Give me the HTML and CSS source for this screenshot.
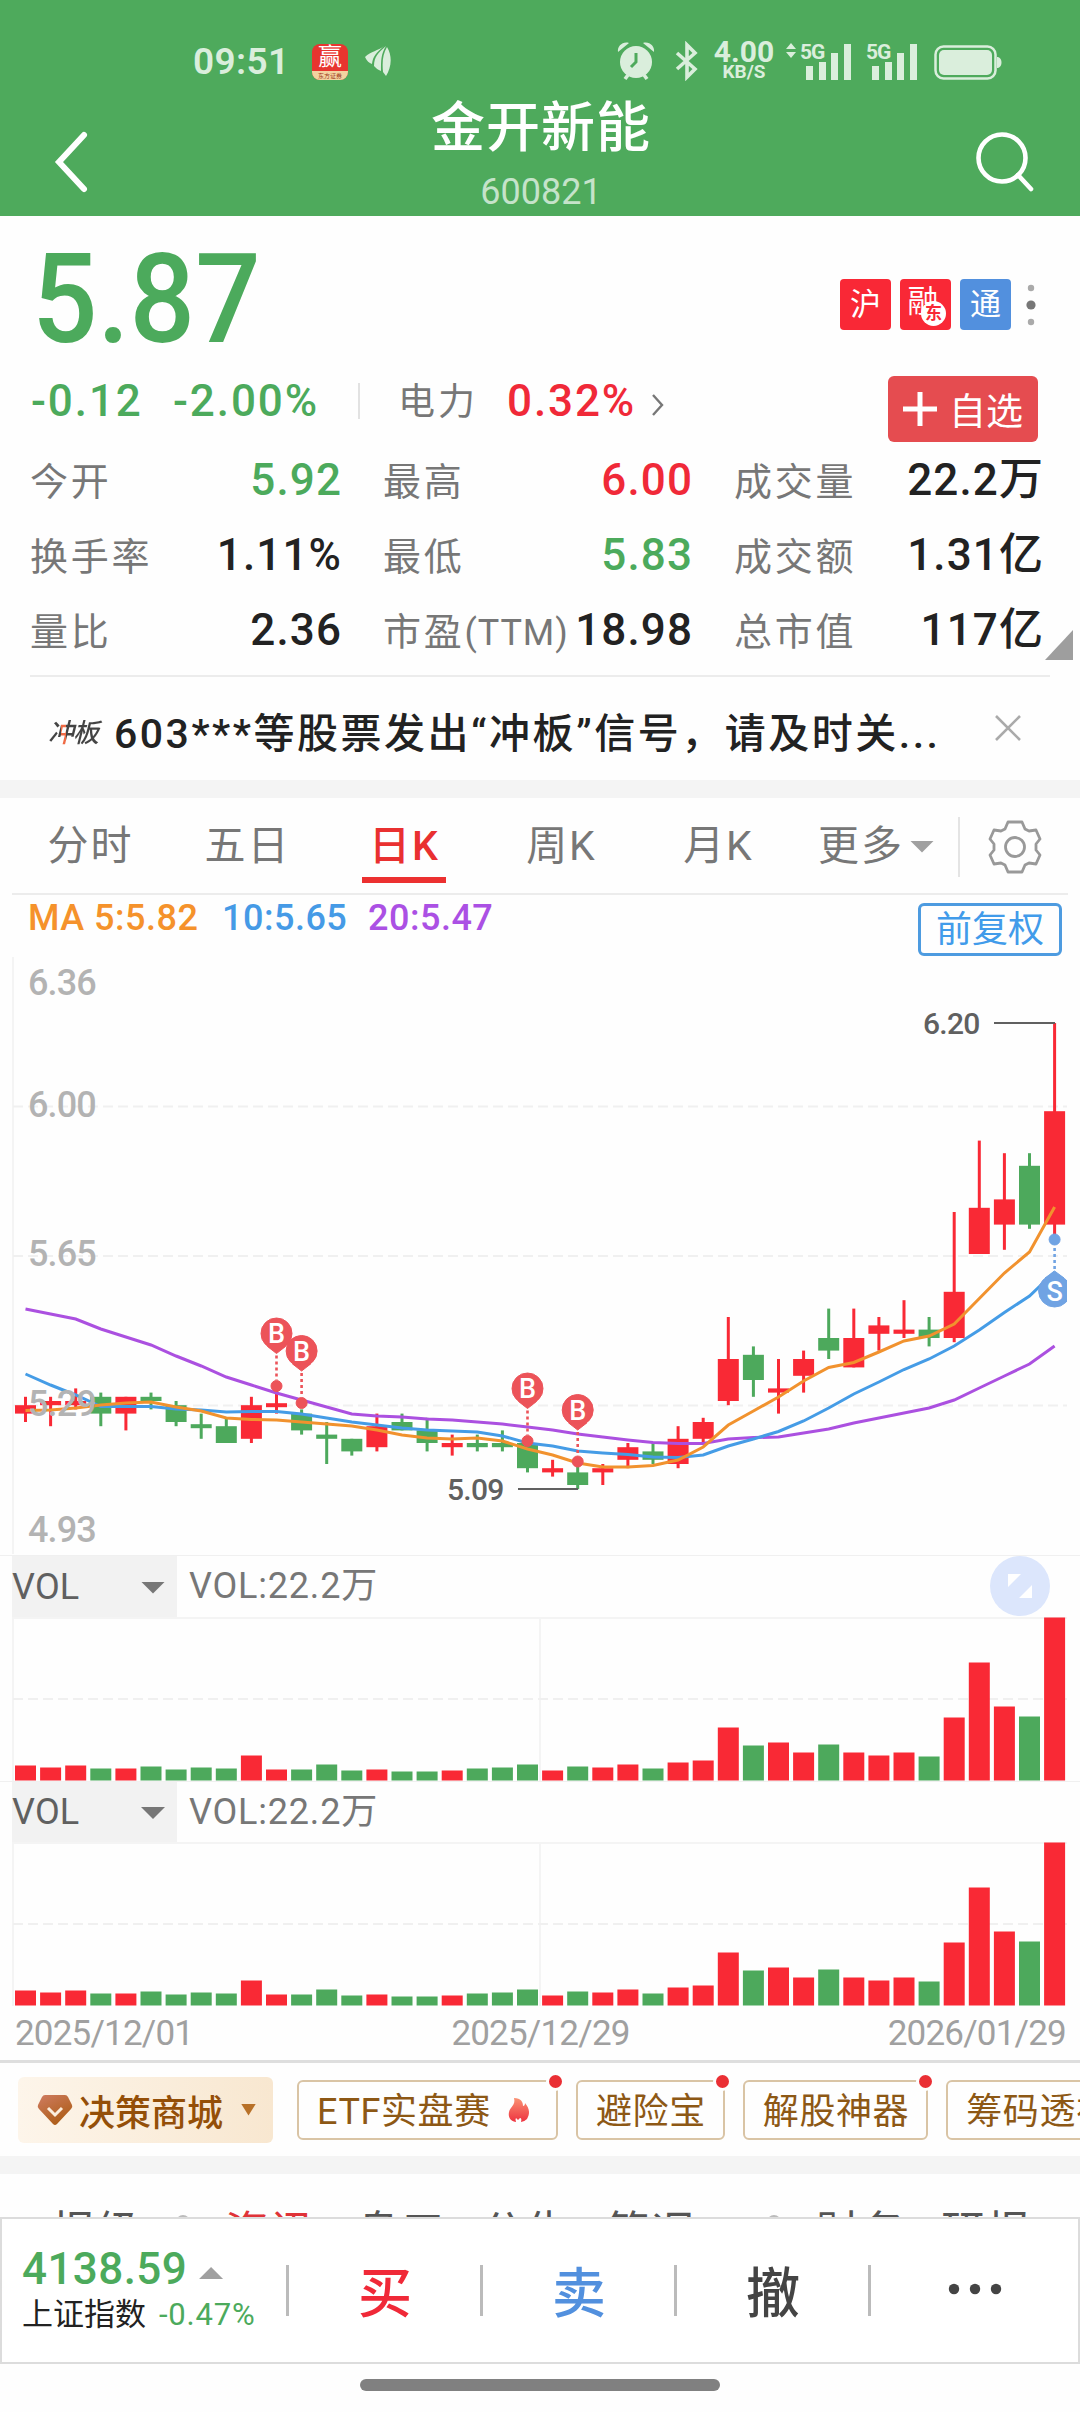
FILE: index.html
```html
<!DOCTYPE html>
<html lang="zh-CN">

<head>
    <meta charset="UTF-8">
    <meta name="viewport" content="width=device-width, initial-scale=1.0">
    <title>金开新能 600821</title>
    <link rel="stylesheet" href="styles.css">
</head>

<body>
    <header class="header">
        <div class="status">
            <span class="clock">09:51</span>
            <div class="app-icon"><span>赢</span><small>东方证券</small></div>
            <svg class="leaf" width="28" height="32" viewBox="0 0 28 32">
                <path d="M1 12C7 6 14 6 20 1C12 8 9 11 8 19C5 18 3 16 1 12Z M10 21C10 12 14 8 22 1C17 9 17 15 17 26C14 25 12 23 10 21Z M19 27C18 16 19 9 23 2C29 12 27 23 22 31Z" />
            </svg>
            <div class="status-right">
                <svg width="38" height="40" viewBox="0 0 38 40">
                    <circle cx="19" cy="21" r="16" />
                    <path d="M1 11C0 5 6 0 12 2Z M37 11C38 5 32 0 26 2Z" />
                    <path class="line" d="M11 34L8 38M27 34L30 38" />
                    <path class="hand" d="M19 12V21L14 26" />
                </svg>
                <svg class="bluetooth" width="24" height="40" viewBox="0 0 24 40">
                    <path class="line" d="M2 12L20 28L12 36V4L20 12L2 28" />
                </svg>
                <div class="speed"><b>4.00</b><b class="unit">KB/S</b></div>
                <svg width="72" height="40" viewBox="0 0 72 40">
                    <path d="M1 8L6 2L11 8Z M1 11H11L6 17Z" />
                    <text x="15" y="18">5G</text>
                    <path d="M21 25h7v14h-7z M34 21h7v18h-7z M46 12h7v27h-7z M59 3h7v36h-7z" />
                </svg>
                <svg class="second-sim" width="56" height="40" viewBox="0 0 56 40">
                    <text x="0" y="18">5G</text>
                    <path d="M6 25h7v14h-7z M19 21h7v18h-7z M31 12h7v27h-7z M44 3h7v36h-7z" />
                </svg>
                <svg class="battery" width="68" height="40" viewBox="0 0 68 40">
                    <rect class="shell" x="1.5" y="5.5" width="60" height="32" rx="8" />
                    <rect x="5" y="9" width="53" height="25" rx="5" />
                    <path d="M63 16C69 16 69 27 63 27Z" />
                </svg>
            </div>
        </div>
        <div class="titlebar">
            <svg width="40" height="64" viewBox="0 0 40 64">
                <path d="M33 5L8 32L33 59" />
            </svg>
            <div class="title">
                <h1>金开新能</h1>
                <p>600821</p>
            </div>
            <svg class="search" width="64" height="64" viewBox="0 0 64 64">
                <circle cx="28" cy="28" r="23.5" />
                <path d="M44 45L57 59" />
            </svg>
        </div>
    </header>

    <section class="quote">
        <div class="price-row">
            <span class="price">5.87</span>
            <div class="badges">
                <span class="badge">沪</span>
                <span class="badge margin">融<i>东</i></span>
                <span class="badge blue">通</span>
                <svg width="12" height="44" viewBox="0 0 12 44">
                    <circle cx="6" cy="5" r="3.2" />
                    <circle class="mid" cx="6" cy="22" r="4.6" />
                    <circle cx="6" cy="39" r="3.2" />
                </svg>
            </div>
        </div>
        <div class="change-row">
            <span class="green diff">-0.12</span>
            <span class="green percent">-2.00%</span>
            <span class="sector">电力</span>
            <span class="red">0.32%</span>
            <svg width="14" height="26" viewBox="0 0 14 26">
                <path d="M2 3L11 13L2 23" />
            </svg>
            <button class="add"><svg width="36" height="36" viewBox="0 0 36 36"><path d="M18 1V35M1 18H35" /></svg>自选</button>
        </div>
        <div class="stats">
            <div class="stat"><span>今开</span><b class="green">5.92</b></div>
            <div class="stat"><span>最高</span><b class="red">6.00</b></div>
            <div class="stat"><span>成交量</span><b>22.2万</b></div>
            <div class="stat"><span>换手率</span><b>1.11%</b></div>
            <div class="stat"><span>最低</span><b class="green">5.83</b></div>
            <div class="stat"><span>成交额</span><b>1.31亿</b></div>
            <div class="stat"><span>量比</span><b>2.36</b></div>
            <div class="stat"><span>市盈<small>(TTM)</small></span><b>18.98</b></div>
            <div class="stat"><span>总市值</span><b>117亿</b></div>
        </div>
    </section>

    <section class="notice">
        <span class="tag">冲板</span>
        <p>603***等股票发出“冲板”信号，请及时关...</p>
        <svg width="28" height="28" viewBox="0 0 28 28">
            <path d="M2 2L26 26M26 2L2 26" />
        </svg>
    </section>

    <nav class="tabs">
        <span>分时</span>
        <span>五日</span>
        <span class="active">日K</span>
        <span>周K</span>
        <span>月K</span>
        <span class="more">更多<i class="down"></i></span>
        <svg width="60" height="60" viewBox="-30 -30 60 60">
            <path d="M-7 -25H7L10 -18L14 -16L21 -17L25 -8L21 -3V3L25 8L21 17L14 16L10 18L7 25H-7L-10 18L-14 16L-21 17L-25 8L-21 3V-3L-25 -8L-21 -17L-14 -16L-10 -18Z" />
            <circle r="9.5" />
        </svg>
    </nav>

    <div class="legend">
        <span class="ma5">MA 5:5.82</span>
        <span class="ma10">10:5.65</span>
        <span class="ma20">20:5.47</span>
        <button>前复权</button>
    </div>
    <svg class="chart" id="kline" width="1080" height="598" viewBox="0 0 1080 598"></svg>

    <div class="vol-head">
        <span class="select">VOL<i class="down"></i></span>
        <span>VOL:22.2万</span>
        <svg width="60" height="60" viewBox="0 0 60 60">
            <circle cx="30" cy="30" r="30" />
            <path d="M18 18H31L18 31Z M42 29V42H29Z" />
        </svg>
    </div>
    <svg class="chart volume" width="1080" height="164" viewBox="0 0 1080 164"></svg>
    <div class="vol-head second">
        <span class="select">VOL<i class="down"></i></span>
        <span>VOL:22.2万</span>
    </div>
    <svg class="chart volume" width="1080" height="164" viewBox="0 0 1080 164"></svg>
    <div class="dates">
        <span>2025/12/01</span>
        <span>2025/12/29</span>
        <span>2026/01/29</span>
    </div>

    <div class="tools">
        <span class="mall">
            <svg width="36" height="32" viewBox="0 0 36 32">
                <defs>
                    <linearGradient id="gem" x1="0" y1="0" x2="0.6" y2="1">
                        <stop offset="0" stop-color="#cf7c62" />
                        <stop offset="1" stop-color="#ad5d16" />
                    </linearGradient>
                </defs>
                <path fill="url(#gem)" d="M8 1H28Q30 1 31 3L35 11Q36 13 34 15L20 30Q18 32 16 30L2 15Q0 13 1 11L5 3Q6 1 8 1Z" />
                <path class="tick" d="M11 14L18 21L25 14" />
            </svg>
            决策商城<i class="down"></i>
        </span>
        <span class="tool etf dot">ETF实盘赛
            <svg width="22" height="26" viewBox="0 0 22 26">
                <defs>
                    <linearGradient id="fire" x1="0" y1="0" x2="0" y2="1">
                        <stop offset="0" stop-color="#fa9273" />
                        <stop offset="1" stop-color="#ee3340" />
                    </linearGradient>
                </defs>
                <path fill="url(#fire)" d="M6 1C13 1 15 5 15 9Q17 9 17 6C22 12 22 17 19 22Q16 25 13 25Q14 21 12 21L10 23L8 21Q7 22 8 25C2 24 0 20 1 15C2 10 8 8 6 1Z" />
            </svg>
        </span>
        <span class="tool dot">避险宝</span>
        <span class="tool dot">解股神器</span>
        <span class="tool">筹码透视</span>
    </div>

    <nav class="info">
        <span>报级</span><i></i>
        <span class="active">资讯</span>
        <span>盘口</span>
        <span>公告</span>
        <span>简况</span><i class="wide"></i>
        <span>财务</span>
        <span>研报</span>
    </nav>

    <footer class="trade">
        <div class="index">
            <div class="points">4138.59<i class="up"></i></div>
            <div class="name">上证指数<span>-0.47%</span></div>
        </div>
        <span class="action red">买</span>
        <span class="action sell">卖</span>
        <span class="action">撤</span>
        <span class="action">
            <svg width="54" height="12" viewBox="0 0 54 12">
                <circle cx="6" cy="6" r="5.2" />
                <circle cx="27" cy="6" r="5.2" />
                <circle cx="48" cy="6" r="5.2" />
            </svg>
        </span>
    </footer>
    <div class="home"></div>

    <script src="chart.js"></script>
</body>

</html>
```
FILE: styles.css
```css
* {
    margin: 0;
    padding: 0;
    box-sizing: border-box;
}

body {
    width: 1080px;
    height: 2412px;
    overflow: hidden;
    background-color: #fefefe;
    color: #222;
    font-family: Roboto, "Noto Sans CJK SC", sans-serif;
}

svg {
    display: block;
    flex: none;
}

i {
    font-style: normal;
}

span,
p,
b {
    white-space: nowrap;
}

.green {
    color: #4caa5c;
}

.red {
    color: #f02938;
}

.down {
    width: 24px;
    height: 12px;
    background-color: #777;
    clip-path: polygon(0 0, 100% 0, 50% 100%);
}

/* header */

.header {
    height: 216px;
    padding-top: 36px;
    background-color: #4eaa5c;
    color: white;
}

.status {
    display: flex;
    align-items: center;
    height: 50px;
    padding: 0 78px 0 193px;
    color: #daeedc;
    fill: #daeedc;
}

.clock {
    width: 119px;
    font-size: 37px;
    font-weight: 600;
    letter-spacing: 0.4px;
}

.app-icon {
    width: 36px;
    height: 36px;
    margin: 2px 16px 0 0;
    border-radius: 8px;
    overflow: hidden;
    background-color: #e8352f;
    color: white;
    text-align: center;
}

.app-icon span {
    display: block;
    height: 27px;
    font-size: 24px;
    line-height: 27px;
}

.app-icon small {
    display: block;
    height: 9px;
    background-color: #f3d3a0;
    color: #a03a20;
    font-size: 6px;
    line-height: 9px;
}

.status-right {
    display: flex;
    align-items: center;
    margin-left: auto;
}

.status .line {
    fill: none;
    stroke: #daeedc;
    stroke-width: 3.6;
}

.status .hand {
    fill: none;
    stroke: #4eaa5c;
    stroke-width: 3;
}

.status text {
    font-size: 21px;
    font-weight: 700;
    letter-spacing: -1px;
}

.bluetooth {
    margin: 0 14px 0 20px;
}

.speed {
    display: flex;
    flex-direction: column;
    align-items: center;
    width: 62px;
    margin-right: 10px;
}

.speed b {
    font-size: 30px;
    line-height: 22px;
}

.speed .unit {
    font-size: 19px;
    line-height: 18px;
}

.second-sim {
    margin-left: 9px;
}

.battery {
    margin-left: 12px;
}

.battery .shell {
    fill: none;
    stroke: #daeedc;
    stroke-width: 2.5;
}

.titlebar {
    display: flex;
    justify-content: space-between;
    height: 130px;
    padding: 0 42px 0 51px;
    fill: none;
    stroke: white;
    stroke-width: 6;
    stroke-linecap: round;
}

.titlebar > svg {
    margin-top: 44px;
}

.titlebar .search {
    stroke-width: 4.6;
}

.title {
    padding: 13px 0 0 17px;
    text-align: center;
}

.title h1 {
    font-size: 54px;
    font-weight: 500;
    line-height: 60px;
    letter-spacing: 1px;
}

.title p {
    margin-top: 15px;
    color: #c5e3ca;
    font-size: 36px;
    line-height: 36px;
}

/* quote */

.quote {
    position: relative;
    height: 459px;
    padding-top: 21px;
}

.quote::after {
    content: "";
    position: absolute;
    right: 7px;
    bottom: 15px;
    border-left: 28px solid transparent;
    border-bottom: 30px solid #9e9e9e;
}

.price-row {
    display: flex;
    justify-content: space-between;
    height: 125px;
    padding: 0 43px 0 32px;
}

.price {
    color: #4caa5c;
    font-size: 124px;
    font-weight: 500;
    line-height: 125px;
    transform: scaleX(0.93);
    transform-origin: left;
}

.badges {
    display: flex;
    align-items: center;
    gap: 9px;
    height: 51px;
    margin-top: 42px;
    fill: #aaa;
}

.badges svg {
    margin-left: 5px;
}

.badges .mid {
    fill: #777;
}

.badge {
    position: relative;
    width: 51px;
    height: 51px;
    border-radius: 4px;
    background-color: #f92836;
    color: white;
    font-size: 31px;
    line-height: 52px;
    text-align: center;
}

.badge.margin {
    padding-right: 5px;
    line-height: 46px;
}

.badge.blue {
    background-color: #5290de;
}

.badge i {
    position: absolute;
    right: 5px;
    bottom: 4px;
    width: 25px;
    height: 25px;
    border-radius: 50%;
    background-color: white;
    color: #f92836;
    font-size: 17px;
    font-weight: 700;
    line-height: 24px;
}

.change-row {
    display: flex;
    align-items: center;
    height: 78px;
    padding: 0 42px 0 31px;
    font-size: 44px;
    font-weight: 500;
    letter-spacing: 1.9px;
}

.diff {
    width: 142px;
}

.percent {
    width: 185px;
}

.sector {
    width: 149px;
    height: 36px;
    padding: 0 0 0 38px;
    border-left: 2px solid #e2e2e2;
    color: #777;
    font-size: 37px;
    font-weight: 400;
    line-height: 40px;
    letter-spacing: 3px;
}

.change-row > svg {
    margin: 8px 0 0 15px;
    fill: none;
    stroke: #777;
    stroke-width: 2.4;
}

.add {
    display: flex;
    align-items: center;
    gap: 11px;
    width: 150px;
    height: 66px;
    margin: 16px 0 0 auto;
    padding-left: 14px;
    border: none;
    border-radius: 6px;
    background-color: #e54c50;
    color: white;
    font-family: inherit;
    font-size: 37px;
    white-space: nowrap;
}

.add svg {
    stroke: white;
    stroke-width: 5;
}

.stats {
    display: grid;
    grid-template-columns: 310px 308px 308px;
    grid-auto-rows: 75px;
    column-gap: 43px;
    margin: 2px 0 0 30px;
}

.stat {
    display: flex;
    justify-content: space-between;
    line-height: 77px;
}

.stat span {
    color: #777;
    font-size: 38px;
    line-height: 80px;
    letter-spacing: 2.8px;
}

.stat small {
    font-size: 36px;
    letter-spacing: 0.9px;
}

.stat b {
    font-size: 44px;
    font-weight: 500;
    letter-spacing: 1.1px;
    margin-right: -2px;
}

.notice {
    display: flex;
    align-items: center;
    height: 105px;
    margin: 0 30px;
    padding: 3px 28px 0 18px;
    border-top: 2px solid #ececec;
}

.notice .tag {
    width: 66px;
    background: linear-gradient(90deg, #444 13px, #ef6a45 13px, #ef6a45 18px, #444 18px);
    background-clip: text;
    color: transparent;
    font-size: 26px;
    font-weight: 500;
    font-style: italic;
    letter-spacing: -1px;
}

.notice p {
    font-size: 41px;
    font-weight: 500;
    letter-spacing: 2.5px;
}

.notice svg {
    margin: -4px 0 0 auto;
    stroke: #aaa;
    stroke-width: 2.6;
}

/* chart */

.tabs {
    display: grid;
    grid-template-columns: repeat(5, 157px) 163px auto;
    align-items: center;
    height: 115px;
    padding-left: 12px;
    border-top: 18px solid #f4f4f4;
    background: linear-gradient(#ececec, #ececec) 12px 100% / 1056px 2px no-repeat;
    color: #777;
    font-size: 41px;
    line-height: 93px;
    letter-spacing: 2px;
    text-align: center;
}

.tabs .active {
    position: relative;
    color: #e93030;
    font-weight: 500;
}

.tabs .active::after {
    content: "";
    position: absolute;
    left: 36px;
    bottom: 10px;
    width: 84px;
    height: 6px;
    background-color: #ec3030;
}

.tabs .more {
    display: flex;
    align-items: center;
    gap: 6px;
    height: 60px;
    padding-left: 21px;
    border-right: 2px solid #e4e4e4;
}

.tabs .down {
    background-color: #a0a0a0;
}

.tabs svg {
    margin-left: 25px;
    fill: none;
    stroke: #999;
    stroke-width: 2.8;
    stroke-linejoin: round;
}

.legend {
    display: flex;
    height: 62px;
    padding: 0 18px 0 28px;
    font-size: 36px;
    font-weight: 500;
    line-height: 46px;
    letter-spacing: 0.5px;
}

.ma5 {
    width: 194px;
    color: #f5922b;
}

.ma10 {
    width: 146px;
    color: #459ae6;
}

.ma20 {
    color: #ab50e4;
}

.legend button {
    width: 144px;
    height: 53px;
    margin: 8px 0 0 auto;
    border: 3px solid #4d9be0;
    border-radius: 6px;
    background-color: #fefefe;
    color: #419bea;
    font-family: inherit;
    font-size: 36px;
    line-height: 44px;
}

.frame {
    fill: none;
    stroke: #f4f4f4;
    stroke-width: 2;
}

.dash {
    stroke: #f0f0f0;
    stroke-width: 2;
    stroke-dasharray: 10 5;
}

.rise {
    fill: #f92935;
    stroke: none;
}

.fall {
    fill: #4da95c;
    stroke: none;
}

.average {
    fill: none;
    stroke-width: 3;
}

.average.ma5 {
    stroke: #f1922e;
}

.average.ma10 {
    stroke: #459ce6;
}

.average.ma20 {
    stroke: #ab50e0;
}

.axis {
    fill: #b3b3b3;
    font-size: 36px;
    font-weight: 500;
    letter-spacing: -0.9px;
}

.extreme {
    fill: #606060;
    font-size: 30px;
    font-weight: 500;
    letter-spacing: -0.7px;
}

.pointer {
    stroke: #606060;
    stroke-width: 2;
}

.buy {
    fill: #ec5359;
    stroke: #ec5359;
}

.sell-mark {
    fill: #70a3e3;
    stroke: #70a3e3;
}

.stem {
    stroke-width: 2.6;
    stroke-dasharray: 3 3;
}

.letter {
    fill: white;
    stroke: none;
    font-size: 27px;
    font-weight: 500;
    text-anchor: middle;
}

.vol-head {
    display: flex;
    height: 62px;
    padding: 0 30px 0 12px;
    border-top: 1px solid #f0f0f0;
    color: #777;
    font-size: 36px;
    line-height: 61px;
    letter-spacing: 0.8px;
}

.vol-head.second {
    height: 61px;
}

.vol-head .select {
    display: flex;
    justify-content: space-between;
    align-items: center;
    width: 165px;
    margin-right: 12px;
    padding-right: 12px;
    background-color: #f2f2f2;
    color: #606060;
    line-height: 52px;
    letter-spacing: 0.2px;
}

.vol-head .select .down {
    margin-top: 2px;
}

.vol-head svg {
    margin-left: auto;
    fill: #dce6fc;
}

.vol-head path {
    fill: white;
}

.dates {
    display: flex;
    justify-content: space-between;
    padding: 0 14px 0 15px;
    color: #a0a0a0;
    font-size: 35px;
    line-height: 55px;
    height: 54px;
    letter-spacing: -0.8px;
}

/* tools */

.tools {
    display: flex;
    align-items: center;
    gap: 18px;
    height: 96px;
    padding-left: 18px;
    border-top: 3px solid #dedede;
    color: #8d5815;
    font-size: 36px;
}

.mall {
    display: flex;
    align-items: center;
    flex: none;
    width: 255px;
    height: 66px;
    margin-right: 6px;
    padding: 0 17px 0 19px;
    border-radius: 6px;
    background: linear-gradient(90deg, #fdf5ea, #f8e7d0);
    color: #944f08;
    font-weight: 500;
}

.mall svg {
    margin-right: 6px;
}

.mall .tick {
    fill: none;
    stroke: #fbeedd;
    stroke-width: 3;
}

.mall .down {
    width: 15px;
    margin-left: auto;
    background-color: #b87128;
}

.tool {
    position: relative;
    display: flex;
    align-items: center;
    justify-content: space-between;
    flex: none;
    height: 60px;
    padding: 0 17px 4px 18px;
    border: 2px solid #d9c4a5;
    border-radius: 6px;
    letter-spacing: 0.6px;
}

.etf {
    width: 261px;
    padding-right: 26px;
}

.etf svg {
    margin-top: 4px;
}

.dot::after {
    content: "";
    position: absolute;
    top: -10px;
    right: -9px;
    width: 13px;
    height: 13px;
    border: 3px solid #fefefe;
    border-radius: 50%;
    background-color: #ea2f34;
    box-sizing: content-box;
}

.info {
    display: flex;
    gap: 35px;
    height: 61px;
    padding: 32px 0 0 51px;
    border-top: 18px solid #f4f4f4;
    overflow: hidden;
    color: #555;
    font-size: 44px;
    line-height: 54px;
    letter-spacing: 1px;
}

.info .active {
    margin-right: 6px;
    color: #e03338;
}

.info i {
    width: 14px;
    height: 14px;
    margin-top: 9px;
    border-radius: 50%;
    background-color: #bbb;
}

.info .wide {
    margin-left: 36px;
}

.trade {
    display: flex;
    height: 147px;
    border: 2px solid #dcdcdc;
    background-color: white;
}

.index {
    width: 284px;
    padding: 24px 0 0 20px;
}

.points {
    display: flex;
    align-items: center;
    gap: 12px;
    color: #4caa5c;
    font-size: 44px;
    font-weight: 500;
    line-height: 52px;
    letter-spacing: 0.4px;
}

.up {
    width: 24px;
    height: 12px;
    margin-top: 8px;
    background-color: #a0a0a0;
    clip-path: polygon(0 100%, 100% 100%, 50% 0);
}

.name {
    font-size: 31px;
    line-height: 40px;
}

.name span {
    margin-left: 13px;
    color: #4caa5c;
    letter-spacing: 0.8px;
}

.action {
    display: flex;
    align-items: center;
    justify-content: center;
    width: 194px;
    padding: 0 0 3px 4px;
    color: #444;
    fill: #444;
    font-size: 54px;
    font-weight: 500;
    background: linear-gradient(#bbb, #bbb) 0 46px / 3px 51px no-repeat;
}

.action.red {
    color: #f02938;
}

.action:last-child {
    width: 210px;
}

.action.sell {
    color: #5290de;
}

.home {
    width: 360px;
    height: 12px;
    margin: 15px auto 0;
    border-radius: 6px;
    background-color: #808080;
}
```
FILE: chart.js
```js
const START = 25.5;
const STEP = 25.1;
const BAR = 21;

// open/close top, open/close bottom, high, low, 1 = rise, volume
const days = [
    [5.29, 5.27, 5.31, 5.25, 1, 15], [5.30, 5.29, 5.31, 5.24, 1, 13], [5.30, 5.29, 5.33, 5.28, 1, 15],
    [5.31, 5.27, 5.32, 5.24, 0, 12], [5.31, 5.27, 5.31, 5.23, 1, 12], [5.31, 5.30, 5.32, 5.28, 0, 14],
    [5.29, 5.25, 5.30, 5.24, 0, 11], [5.24, 5.24, 5.27, 5.21, 0, 13], [5.24, 5.20, 5.26, 5.20, 0, 12],
    [5.29, 5.21, 5.31, 5.20, 1, 25], [5.29, 5.29, 5.33, 5.27, 1, 11], [5.27, 5.23, 5.28, 5.22, 0, 11],
    [5.22, 5.21, 5.25, 5.15, 0, 16], [5.21, 5.18, 5.21, 5.17, 0, 10], [5.24, 5.19, 5.27, 5.18, 1, 11],
    [5.25, 5.23, 5.27, 5.23, 0, 9], [5.23, 5.20, 5.26, 5.18, 0, 9], [5.20, 5.19, 5.22, 5.17, 1, 10],
    [5.20, 5.19, 5.22, 5.18, 0, 12], [5.20, 5.19, 5.23, 5.18, 0, 13], [5.20, 5.14, 5.20, 5.13, 0, 16],
    [5.14, 5.13, 5.16, 5.12, 1, 10], [5.13, 5.10, 5.15, 5.09, 0, 14], [5.14, 5.13, 5.15, 5.10, 1, 13],
    [5.19, 5.16, 5.20, 5.14, 1, 16], [5.18, 5.16, 5.20, 5.15, 0, 12], [5.21, 5.15, 5.24, 5.14, 1, 18],
    [5.25, 5.21, 5.26, 5.20, 1, 20], [5.40, 5.30, 5.50, 5.29, 1, 53], [5.41, 5.35, 5.43, 5.31, 0, 35],
    [5.33, 5.32, 5.40, 5.27, 1, 38], [5.40, 5.36, 5.42, 5.32, 1, 28], [5.45, 5.42, 5.52, 5.40, 0, 36],
    [5.45, 5.38, 5.52, 5.38, 1, 28], [5.48, 5.46, 5.50, 5.42, 1, 25], [5.47, 5.46, 5.54, 5.45, 1, 28],
    [5.47, 5.45, 5.50, 5.43, 0, 24], [5.56, 5.45, 5.75, 5.44, 1, 63], [5.76, 5.65, 5.92, 5.65, 1, 118],
    [5.78, 5.72, 5.89, 5.66, 1, 74], [5.86, 5.72, 5.89, 5.71, 0, 64], [5.99, 5.72, 6.20, 5.69, 1, 163]
];

const averages = {
    ma20: [352, 357, 362, 372, 380, 388, 399, 409, 420, 428, 436, 443, 450, 457, 459, 460, 462, 463, 465, 467, 470, 473, 477, 480, 483, 485.5, 486.5, 486.5, 482, 480.6, 480, 476, 472, 466, 461, 456, 451, 443, 431, 419, 407, 389],
    ma10: [417, 428, 438, 449.5, 449.5, 449.5, 452, 453, 455, 454.5, 454.5, 457, 461, 465, 468, 471, 473, 474, 475, 479, 486, 489, 494, 496, 497.5, 500, 500.5, 498, 489, 482, 474.5, 464, 451, 437, 425, 412.5, 402, 389, 373, 355.5, 339, 315],
    ma5: [453.5, 453, 451, 448, 446, 445, 450, 454, 461, 462.5, 463, 465, 467, 469, 473, 478, 481, 482, 481, 484, 492, 498, 506, 510, 510, 508.5, 503, 490, 468, 454, 440, 424, 410.5, 405.5, 395, 384, 379, 367, 341.5, 316, 295, 250]
};

// day, balloon y, dot y
const buys = [[10, 376.5, 429], [11, 394, 446], [20, 431.5, 484], [22, 453, 504.5]];

function xOf(i) {
    return START + STEP * i;
}

function yOf(price) {
    return 66 + (6.20 - price) * 420;
}

function drawKline() {
    let out = '<path class="frame" d="M13 0V597"/>';
    [149.5, 299, 448.5].forEach(y => {
        out += `<path class="dash" d="M13 ${y}H1067"/>`;
    });

    days.forEach((d, i) => {
        let x = xOf(i);
        let top = yOf(d[0]);
        let height = yOf(d[1]) - top;
        if (height < 1) {
            top -= 2;
            height = 4;
        }
        out += `<g class="${d[4] ? "rise" : "fall"}">
            <rect x="${x - 1.5}" y="${yOf(d[2])}" width="3" height="${yOf(d[3]) - yOf(d[2])}"/>
            <rect x="${x - BAR / 2}" y="${top}" width="${BAR}" height="${height}"/></g>`;
    });

    for (let name in averages) {
        let points = averages[name].map((y, i) => xOf(i) + "," + y).join(" ");
        out += `<polyline class="average ${name}" points="${points}"/>`;
    }

    buys.forEach(([day, y, dot]) => {
        let x = xOf(day);
        out += `<g class="buy"><path class="stem" d="M${x} ${y + 22}V${dot - 6}"/>
            <circle cx="${x}" cy="${dot}" r="5.5"/>
            <circle cx="${x}" cy="${y}" r="15.5"/>
            <path d="M${x - 9} ${y + 13}H${x + 9}L${x} ${y + 20}Z"/>
            <text class="letter" x="${x}" y="${y + 9.5}">B</text></g>`;
    });

    // the sell balloon is cut off by the right edge of the chart
    out += `<svg width="1067" height="598"><g class="sell-mark"><path class="stem" d="M1054.6 291V314"/>
        <circle cx="1054.6" cy="282.5" r="5.5"/>
        <circle cx="1054.6" cy="334" r="16"/>
        <path d="M1045 321H1064L1054.6 314Z"/>
        <text class="letter" x="1054.6" y="343.5">S</text></g></svg>`;

    out += `<text class="axis" x="28" y="38">6.36</text>
        <text class="axis" x="28" y="160">6.00</text>
        <text class="axis" x="28" y="309">5.65</text>
        <text class="axis" x="28" y="459">5.29</text>
        <text class="axis" x="28" y="585">4.93</text>
        <text class="extreme" x="923" y="77">6.20</text><path class="pointer" d="M994 66H1055"/>
        <text class="extreme" x="447" y="543">5.09</text><path class="pointer" d="M518 532H578"/>`;
    document.getElementById("kline").innerHTML = out;
}

function drawVolume(svg) {
    let out = '<path class="frame" d="M13 164V1H1067M540 1V164"/><path class="dash" d="M13 82H1067"/>';
    days.forEach((d, i) => {
        out += `<rect class="${d[4] ? "rise" : "fall"}" x="${xOf(i) - BAR / 2}" y="${163.5 - d[5]}" width="${BAR}" height="${d[5]}"/>`;
    });
    svg.innerHTML = out;
}

drawKline();
document.querySelectorAll(".volume").forEach(drawVolume);
```
